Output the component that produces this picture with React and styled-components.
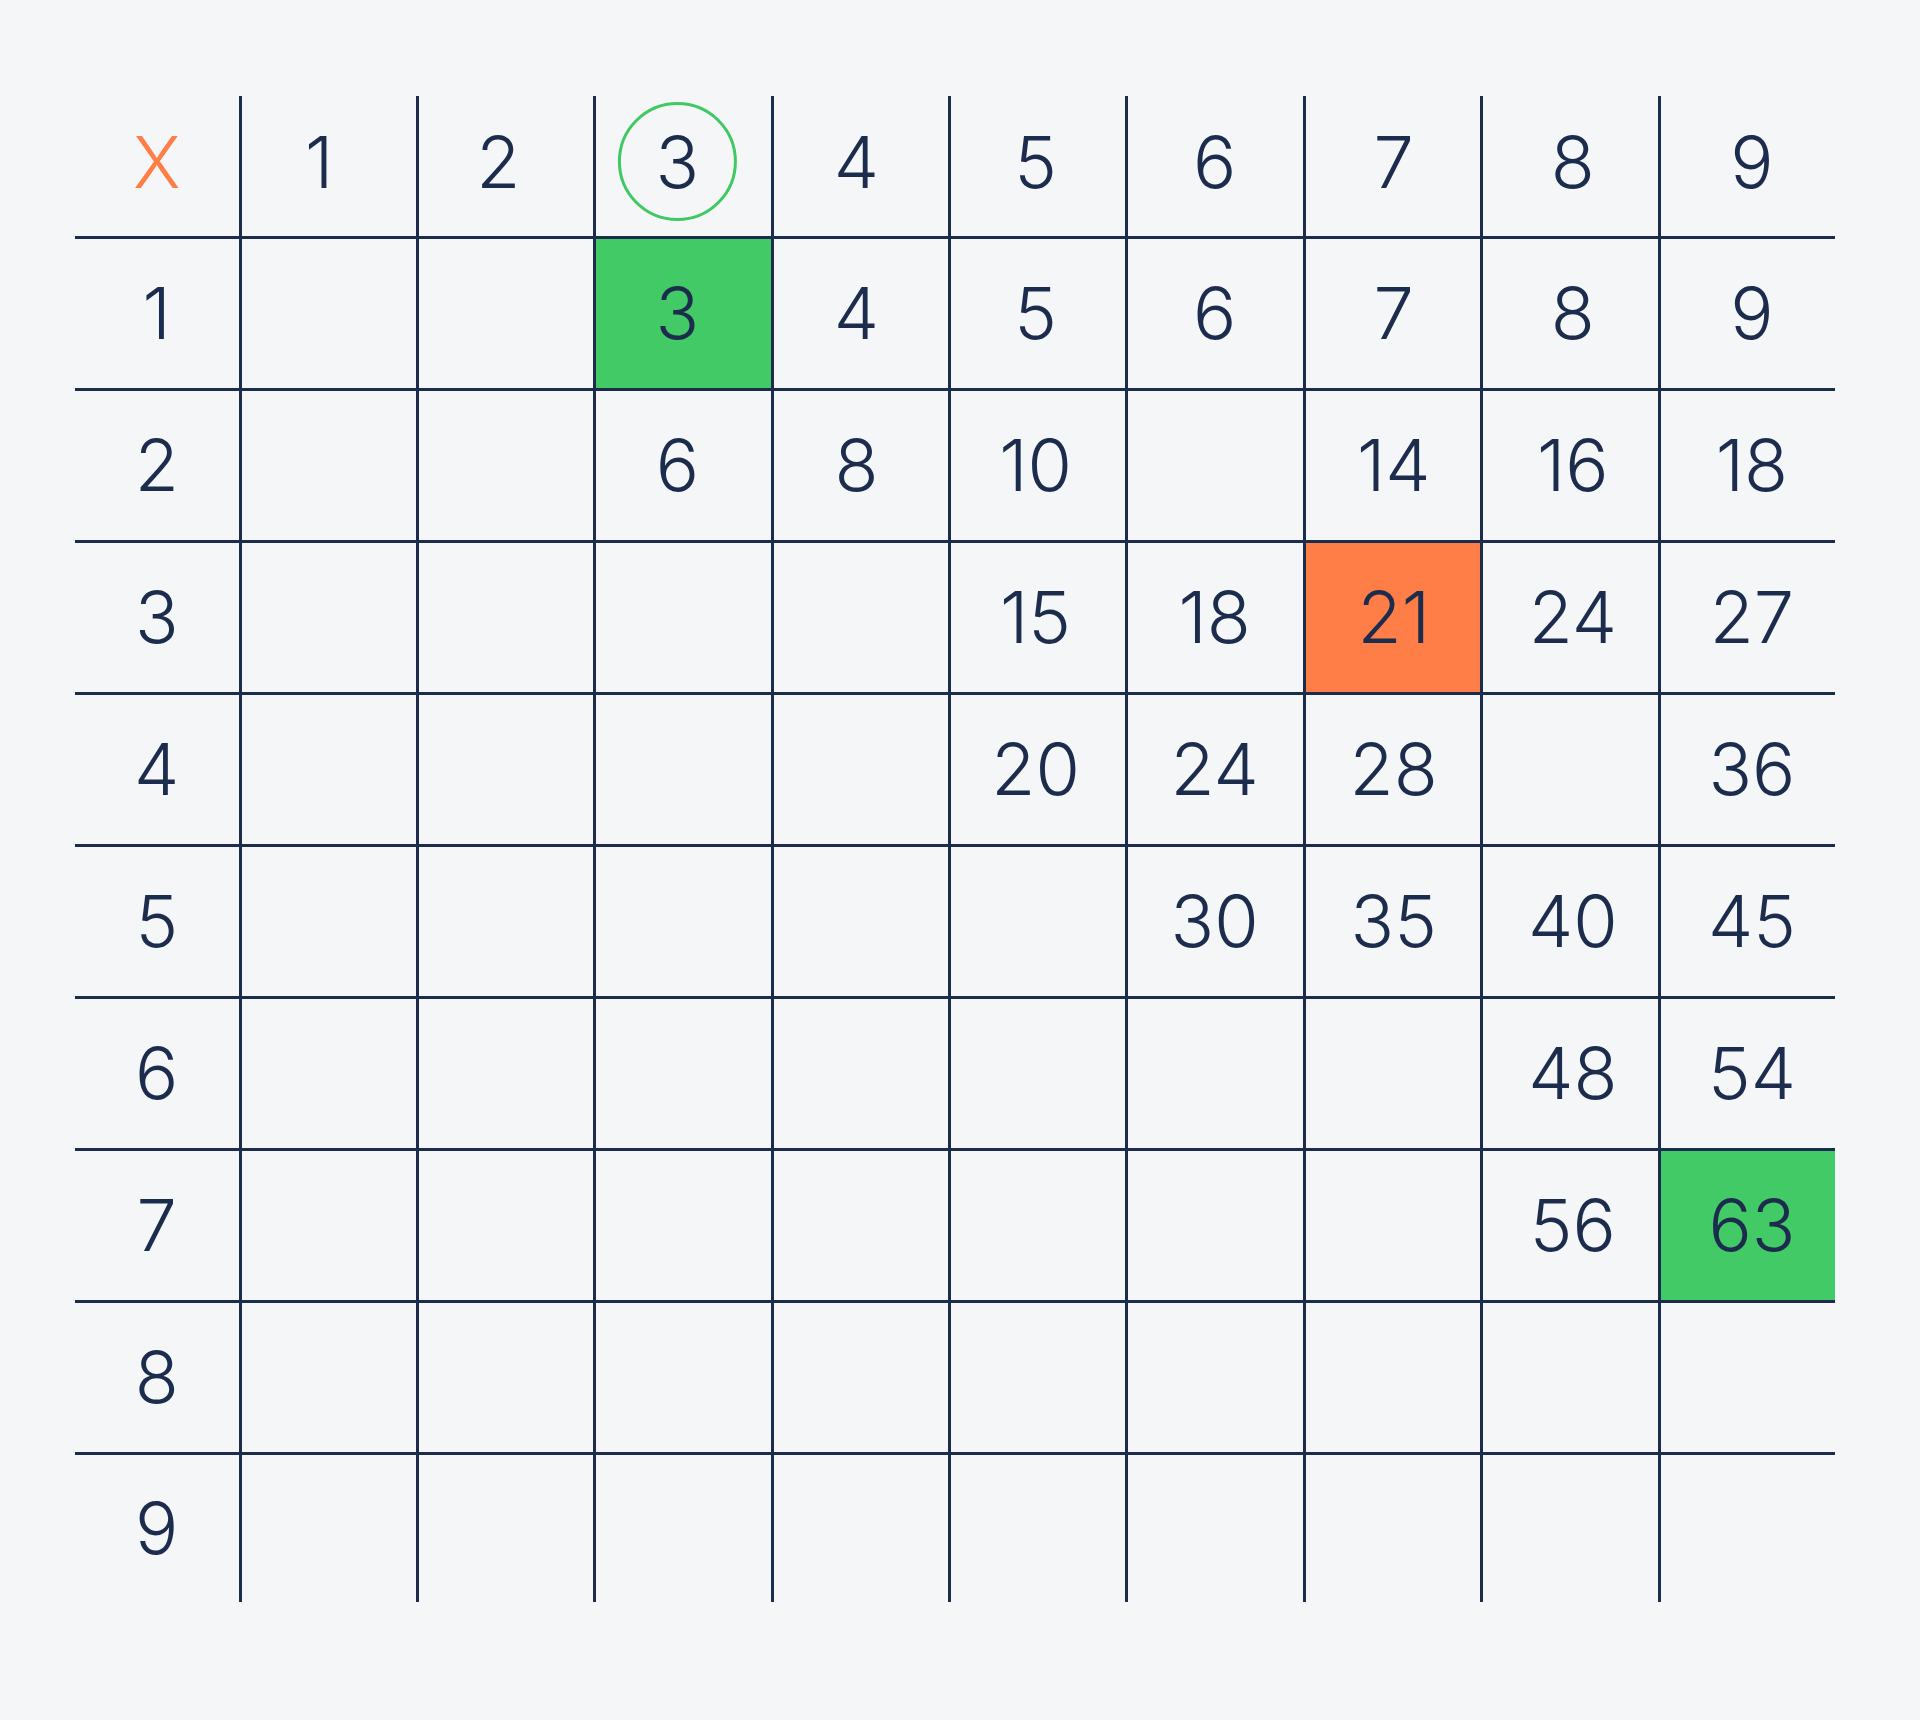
import React from "react";
import styled, { createGlobalStyle } from "styled-components";

const NAVY = "#1c2c4d";
const GREEN = "#41ca65";
const ORANGE = "#ff7e47";
const BG = "#f4f6f8";

const GlobalStyle = createGlobalStyle`
  html, body { margin: 0; padding: 0; background: ${BG}; }
  body { font-family: "Inter", "Liberation Sans", sans-serif; }
`;

const Page = styled.div`
  width: 1920px;
  min-height: 1720px;
  box-sizing: border-box;
  padding: 96px 0 0 75px;
  background: ${BG};
`;

const Table = styled.div`
  display: flex;
  flex-direction: column;
  width: 1760px;
`;

const Row = styled.div`
  display: grid;
  grid-template-columns: 163.5px repeat(9, 177.4px);
  box-sizing: border-box;
  height: ${(p) => (p.$header ? "139.5px" : "152px")};
  border-top: ${(p) => (p.$header ? "none" : `3px solid ${NAVY}`)};
  &:last-child {
    height: 150.5px;
  }
`;

const Cell = styled.div`
  display: flex;
  align-items: center;
  justify-content: center;
  box-sizing: border-box;
  border-left: ${(p) => (p.$first ? "none" : `3px solid ${NAVY}`)};
  background: ${(p) =>
    p.$tone === "green" ? GREEN : p.$tone === "orange" ? ORANGE : "transparent"};
  padding-bottom: ${(p) => (p.$header ? "8px" : "0")};
`;

const Num = styled.span`
  display: block;
  font-size: 72px;
  line-height: 1;
  font-weight: 350;
  color: ${(p) => (p.$accent ? ORANGE : NAVY)};
  transform: translateX(${(p) => p.$shift || 0}px);
`;

const Ring = styled.span`
  display: flex;
  align-items: center;
  justify-content: center;
  width: 119px;
  height: 119px;
  box-sizing: border-box;
  border-radius: 50%;
  border: 3px solid #3fc962;
  transform: translateX(${(p) => p.$shift || 0}px);
`;

const shiftFor = (col) => (col === 0 ? 0 : Math.round((col - 6.6) * 1.7 * 10) / 10);

const visible = {
  1: [3, 4, 5, 6, 7, 8, 9],
  2: [3, 4, 5, 7, 8, 9],
  3: [5, 6, 7, 8, 9],
  4: [5, 6, 7, 9],
  5: [6, 7, 8, 9],
  6: [8, 9],
  7: [8, 9],
  8: [],
  9: [],
};

const tones = {
  "1-3": "green",
  "3-7": "orange",
  "7-9": "green",
};

const cols = [1, 2, 3, 4, 5, 6, 7, 8, 9];

export default function App() {
  return (
    <>
      <GlobalStyle />
      <Page>
        <Table>
          <Row $header>
            <Cell $first $header>
              <Num $accent>X</Num>
            </Cell>
            {cols.map((c) => (
              <Cell key={c} $header>
                {c === 3 ? (
                  <Ring $shift={shiftFor(c)}>
                    <Num>{c}</Num>
                  </Ring>
                ) : (
                  <Num $shift={shiftFor(c)}>{c}</Num>
                )}
              </Cell>
            ))}
          </Row>
          {cols.map((r) => (
            <Row key={r}>
              <Cell $first>
                <Num>{r}</Num>
              </Cell>
              {cols.map((c) => (
                <Cell key={c} $tone={tones[`${r}-${c}`]}>
                  {visible[r].includes(c) ? (
                    <Num $shift={shiftFor(c)}>{r * c}</Num>
                  ) : null}
                </Cell>
              ))}
            </Row>
          ))}
        </Table>
      </Page>
    </>
  );
}
